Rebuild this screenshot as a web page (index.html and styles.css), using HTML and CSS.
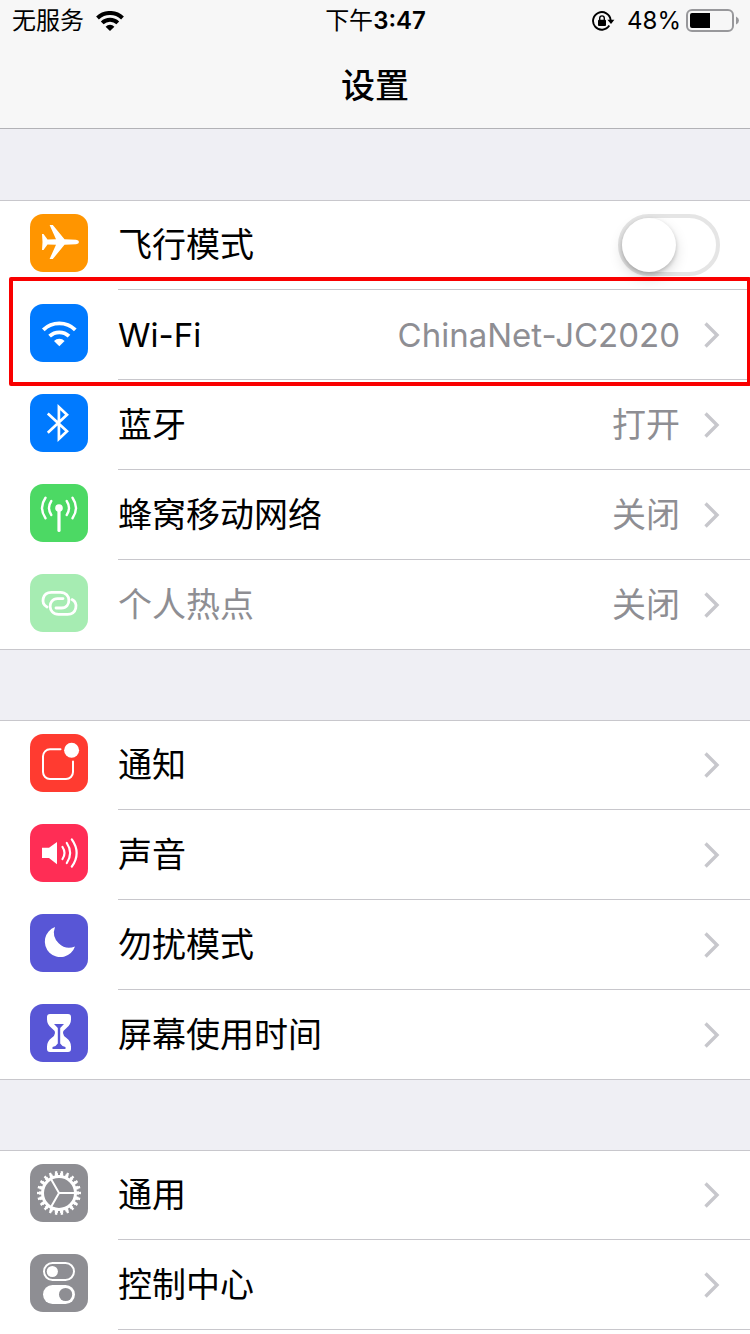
FILE: index.html
```html
<!DOCTYPE html>
<html lang="zh-CN">
<head>
  <meta charset="UTF-8" />
  <meta name="viewport" content="width=device-width, initial-scale=1" />
  <title>设置</title>
  <link rel="stylesheet" href="styles.css">
</head>
<body>

  <!-- shared shapes -->
  <svg class="symbols" aria-hidden="true">
    <symbol id="chevron" viewBox="0 0 16 26">
      <path d="M1.500 1.500 13 13 1.500 24.500" fill="none" stroke="#c7c7cc" stroke-width="3.4" />
    </symbol>
  </svg>

  <header class="header">
    <div class="status-bar">
      <div class="status-left">
        <span>无服务</span>
        <svg width="28" height="20" viewBox="0 0 28 20" aria-hidden="true">
          <g fill="none" stroke="#000" stroke-width="4">
            <path d="M1.5 7A18 18 0 0 1 26.5 7" />
            <path d="M6.2 11.9A11.3 11.3 0 0 1 21.8 11.9" />
          </g>
          <path d="M14 20 9.6 15.7A6.2 6.2 0 0 1 18.4 15.7Z" />
        </svg>
      </div>
      <div class="status-time">下午<b>3:47</b></div>
      <div class="status-right">
        <svg width="23" height="20" viewBox="0 0 23 20" aria-hidden="true">
          <path d="M17.3 14.6A8.8 8.8 0 1 1 18.6 9" fill="none" stroke="#000" stroke-width="1.9" />
          <path d="M15.4 8.8H22.4L19 13Z" />
          <rect x="6" y="8.8" width="8" height="6.2" rx="1" />
          <path d="M7.7 9V7.2a2.3 2.3 0 0 1 4.6 0V9" fill="none" stroke="#000" stroke-width="1.4" />
        </svg>
        <span class="percent">48%</span>
        <svg width="53" height="24" viewBox="0 0 53 24" aria-hidden="true">
          <rect x="1" y="1" width="46" height="21" rx="5" fill="none" stroke="#98989b" stroke-width="2" />
          <path d="M6 4H24V19H6a2 2 0 0 1-2-2V6a2 2 0 0 1 2-2Z" />
          <path d="M50 7.500q3 1.500 3 4t-3 4Z" fill="#98989b" />
        </svg>
      </div>
    </div>
    <h1 class="title">设置</h1>
  </header>

  <main class="settings">
    <section class="group">
      <div class="row">
        <svg class="app-icon orange" viewBox="0 0 58 58" aria-hidden="true">
          <path fill="#fff" d="M12 20h1.500L17.500 25.500 26 25.300 19.600 11H22.800L34.500 25.200 46 25.700q3 .5 3 2.300q0 1.800-3 2.300L34.500 30.800 22.800 45H19.600L26 30.700 17.500 30.500 13.500 36H12L12.500 28Z" />
        </svg>
        <div class="cell">
          <label class="name" for="airplane">飞行模式</label>
          <input class="switch" type="checkbox" role="switch" id="airplane">
        </div>
      </div>

      <a class="row highlighted" href="#wifi">
        <svg class="app-icon blue" viewBox="0 0 58 58" aria-hidden="true">
          <g fill="none" stroke="#fff" stroke-width="3.8">
            <path d="M13.300 25.800A23 23 0 0 1 45.300 25.800" />
            <path d="M19.600 32.200A14 14 0 0 1 39 32.200" />
          </g>
          <path fill="#fff" d="M29.300 42.300 24 37A7.400 7.400 0 0 1 34.600 37Z" />
        </svg>
        <div class="cell">
          <span class="name latin">Wi-Fi</span>
          <span class="value latin">ChinaNet-JC2020</span>
          <svg class="chevron" aria-hidden="true"><use href="#chevron" /></svg>
        </div>
      </a>

      <a class="row" href="#bluetooth">
        <svg class="app-icon blue" viewBox="0 0 58 58" aria-hidden="true">
          <path fill="none" stroke="#fff" stroke-width="2.700" d="M17.800 19.500 37 37.300 28.900 44.900V13.100L37 20.700 17.800 38.800" />
        </svg>
        <div class="cell">
          <span class="name">蓝牙</span>
          <span class="value">打开</span>
          <svg class="chevron" aria-hidden="true"><use href="#chevron" /></svg>
        </div>
      </a>

      <a class="row" href="#cellular">
        <svg class="app-icon green" viewBox="0 0 58 58" aria-hidden="true">
          <circle cx="29" cy="24" r="3.800" fill="#fff" />
          <g fill="none" stroke="#fff" stroke-width="2.400" stroke-linecap="round">
            <path stroke-width="3.200" d="M29 24V46.500" />
            <path d="M21.300 17Q16.700 24 21.300 31M36.700 17Q41.300 24 36.700 31" />
            <path d="M15.500 13.800Q8.500 24 15.500 34.200M42.500 13.800Q49.500 24 42.500 34.200" />
          </g>
        </svg>
        <div class="cell">
          <span class="name">蜂窝移动网络</span>
          <span class="value">关闭</span>
          <svg class="chevron" aria-hidden="true"><use href="#chevron" /></svg>
        </div>
      </a>

      <a class="row disabled" href="#hotspot">
        <svg class="app-icon light-green" viewBox="0 0 58 58" aria-hidden="true">
          <g fill="none" stroke="#fff" stroke-width="2.800" stroke-linecap="round">
            <path d="M17 33C10.500 29.500 12 18.300 21.500 18.300H30.500C41.500 18.300 41.500 34 31.500 34H26" />
            <path transform="rotate(180 29.500 29.300)" d="M17 33C10.500 29.500 12 18.300 21.500 18.300H30.500C41.500 18.300 41.500 34 31.500 34H26" />
          </g>
        </svg>
        <div class="cell">
          <span class="name">个人热点</span>
          <span class="value">关闭</span>
          <svg class="chevron" aria-hidden="true"><use href="#chevron" /></svg>
        </div>
      </a>
    </section>

    <section class="group">
      <a class="row" href="#notifications">
        <svg class="app-icon red" viewBox="0 0 58 58" aria-hidden="true">
          <path fill="none" stroke="#fff" stroke-width="2" stroke-linecap="round" d="M30.500 15.300H20a7 7 0 0 0-7 7V38a7 7 0 0 0 7 7H36a7 7 0 0 0 7-7V27.500" />
          <circle cx="41.600" cy="16.300" r="7.500" fill="#fff" />
        </svg>
        <div class="cell">
          <span class="name">通知</span>
          <svg class="chevron" aria-hidden="true"><use href="#chevron" /></svg>
        </div>
      </a>

      <a class="row" href="#sounds">
        <svg class="app-icon pink" viewBox="0 0 58 58" aria-hidden="true">
          <path fill="#fff" d="M12 23.700H19L27 18V40.300L19 34H12Z" />
          <g fill="none" stroke="#fff" stroke-width="2.200" stroke-linecap="round">
            <path d="M32.500 23Q36.500 29 32.500 35" />
            <path d="M36.800 19Q43.500 29 36.800 39" />
            <path d="M41.800 15.300Q51.500 29 41.800 42.700" />
          </g>
        </svg>
        <div class="cell">
          <span class="name">声音</span>
          <svg class="chevron" aria-hidden="true"><use href="#chevron" /></svg>
        </div>
      </a>

      <a class="row" href="#do-not-disturb">
        <svg class="app-icon purple" viewBox="0 0 58 58" aria-hidden="true">
          <path fill="#fff" d="M25 13A15.500 15.500 0 1 0 45 32.500A15.300 15.300 0 0 1 25 13Z" />
        </svg>
        <div class="cell">
          <span class="name">勿扰模式</span>
          <svg class="chevron" aria-hidden="true"><use href="#chevron" /></svg>
        </div>
      </a>

      <a class="row" href="#screen-time">
        <svg class="app-icon purple" viewBox="0 0 58 58" aria-hidden="true">
          <path fill="#fff" d="M20 10H38q3 0 3 3V15.500q0 5-4.500 8.500q-3.500 2.500-3.500 5t3.500 5q4.500 3.500 4.500 8.500V45q0 3-3 3H20q-3 0-3-3V42.500q0-5 4.500-8.500q3.500-2.500 3.500-5t-3.500-5Q17 20.500 17 15.500V13q0-3 3-3Z" />
          <path fill="#5856d6" d="M24 20H34L30.200 24V39.500Q31.500 42 35.500 43V45H22.500V43Q26.500 42 27.800 39.500V24Z" />
        </svg>
        <div class="cell">
          <span class="name">屏幕使用时间</span>
          <svg class="chevron" aria-hidden="true"><use href="#chevron" /></svg>
        </div>
      </a>
    </section>

    <section class="group">
      <a class="row" href="#general">
        <svg class="app-icon gray" viewBox="0 0 58 58" aria-hidden="true">
          <g fill="none" stroke="#fff">
            <circle cx="29" cy="29" r="16.500" stroke-width="3" />
            <circle cx="29" cy="29" r="18.500" stroke-width="3" pathLength="220" stroke-dasharray="6 4" stroke-dashoffset="3" />
            <circle cx="29" cy="29" r="20.500" stroke-width="3" pathLength="220" stroke-dasharray="4 6" stroke-dashoffset="2" />
            <path stroke-width="2" d="M29 29H45M29 29 21 15.100M29 29 21 42.900" />
          </g>
        </svg>
        <div class="cell">
          <span class="name">通用</span>
          <svg class="chevron" aria-hidden="true"><use href="#chevron" /></svg>
        </div>
      </a>

      <a class="row" href="#control-center">
        <svg class="app-icon gray" viewBox="0 0 58 58" aria-hidden="true">
          <rect x="14" y="9" width="30" height="17" rx="8.500" fill="none" stroke="#fff" stroke-width="2" />
          <circle cx="22.300" cy="17.500" r="5.600" fill="#fff" />
          <rect x="13" y="31" width="32" height="19" rx="9.500" fill="#fff" />
          <circle cx="35.600" cy="40.500" r="6.600" fill="#8e8e93" />
        </svg>
        <div class="cell">
          <span class="name">控制中心</span>
          <svg class="chevron" aria-hidden="true"><use href="#chevron" /></svg>
        </div>
      </a>
    </section>
  </main>

</body>
</html>
```
FILE: styles.css
```css
* {
  box-sizing: border-box;
}

body {
  margin: 0;
  min-height: 100vh;
  display: flex;
  flex-direction: column;
  background-color: #efeff4;
  color: #000;
  font-family: "Inter", "Noto Sans CJK SC", sans-serif;
  font-size: 34px;
}

svg {
  display: block;
  flex-shrink: 0;
}

.symbols {
  position: absolute;
  width: 0;
  height: 0;
}

/* header */
.header {
  background-color: #f7f7f7;
  border-bottom: 1px solid #b2b2b6;
}

.status-bar {
  display: grid;
  grid-template-columns: 1fr auto 1fr;
  align-items: center;
  height: 42px;
  padding: 0 11px 0 12px;
  font-size: 24px;
  line-height: 42px;
}

.status-left,
.status-right {
  display: flex;
  align-items: center;
  gap: 12px;
}

.status-right {
  justify-content: flex-end;
}

.status-time b {
  font-weight: 600;
}

.percent {
  margin-right: -7px;
}

.title {
  margin: 0;
  padding-top: 2px;
  font-size: 34px;
  font-weight: 500;
  line-height: 84px;
  text-align: center;
}

/* list */
.settings {
  flex: 1;
  display: flex;
  flex-direction: column;
  gap: 70px;
  padding-top: 71px;
}

.group {
  background-color: #fff;
  box-shadow: inset 0 1px #c8c7cc;
}

.group:last-child {
  flex: 1;
}

.row {
  position: relative;
  display: flex;
  align-items: center;
  gap: 30px;
  height: 90px;
  padding-left: 30px;
  color: inherit;
  text-decoration: none;
}

.app-icon {
  width: 58px;
  height: 58px;
  margin-bottom: 4px;
  border-radius: 13px;
}

.cell {
  flex: 1;
  display: flex;
  align-items: center;
  height: 90px;
  padding-right: 30px;
  border-bottom: 1px solid #c8c7cc;
}

.group:not(:last-child) .row:last-child {
  box-shadow: inset 0 -1px #c8c7cc;
}

.name,
.value {
  padding-bottom: 4px;
}

.name {
  flex: 1;
}

.value {
  margin-right: 24px;
  color: #8e8e93;
}

.latin {
  padding-bottom: 0;
  font-size: 33px;
}

.disabled .name {
  color: #8e8e93;
}

.chevron {
  width: 16px;
  height: 26px;
}

.highlighted::after {
  content: "";
  position: absolute;
  z-index: 1;
  top: -13px;
  right: -1px;
  bottom: -6px;
  left: 9px;
  border: 4px solid #f90000;
  border-radius: 2px;
}

.settings {
  overflow-x: clip;
}

/* switch */
.switch {
  appearance: none;
  width: 102px;
  height: 62px;
  margin: 0;
  border: 4px solid #e5e5e5;
  border-radius: 31px;
  background-color: #fff;
}

.switch::before {
  content: "";
  display: block;
  width: 54px;
  height: 54px;
  border-radius: 50%;
  background-color: #fff;
  box-shadow: 0 6px 14px rgba(0,0,0,0.15), 0 2px 4px rgba(0,0,0,0.2);
}

.switch:checked {
  border-color: #4cd964;
  background-color: #4cd964;
}

.switch:checked::before {
  margin-left: 40px;
}

/* icon colors */
.orange {
  background-color: #ff9500;
}

.blue {
  background-color: #007aff;
}

.green {
  background-color: #4cd964;
}

.light-green {
  background-color: #a6ecb2;
}

.red {
  background-color: #ff3b30;
}

.pink {
  background-color: #ff2d55;
}

.purple {
  background-color: #5856d6;
}

.gray {
  background-color: #8e8e93;
}
```
